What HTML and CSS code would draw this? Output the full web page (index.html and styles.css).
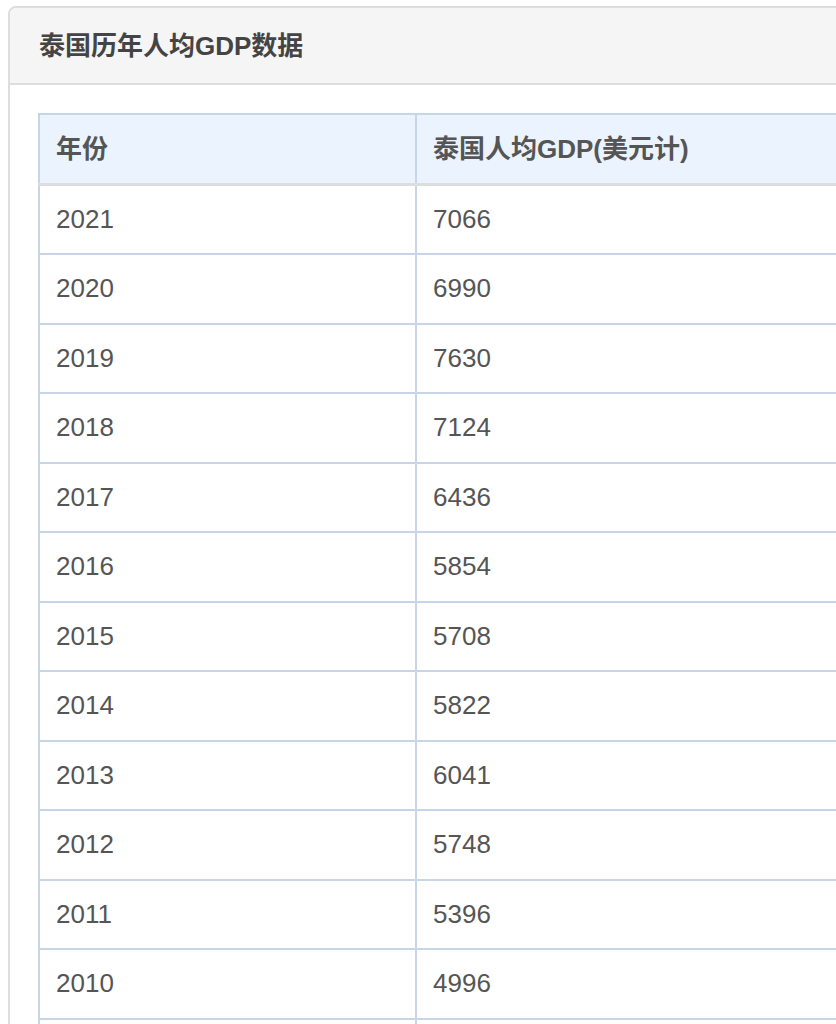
FILE: index.html
```html
<!DOCTYPE html>
<html lang="zh-CN">
<head>
<meta charset="utf-8">
<title>泰国历年人均GDP数据</title>
<link rel="stylesheet" href="styles.css">
</head>
<body>
<div class="panel">
  <div class="panel-heading">泰国历年人均GDP数据</div>
  <div class="panel-body">
    <table class="data">
      <thead>
        <tr><th class="col-year">年份</th><th>泰国人均GDP(美元计)</th></tr>
      </thead>
      <tbody>
        <tr><td>2021</td><td>7066</td></tr>
        <tr><td>2020</td><td>6990</td></tr>
        <tr><td>2019</td><td>7630</td></tr>
        <tr><td>2018</td><td>7124</td></tr>
        <tr><td>2017</td><td>6436</td></tr>
        <tr><td>2016</td><td>5854</td></tr>
        <tr><td>2015</td><td>5708</td></tr>
        <tr><td>2014</td><td>5822</td></tr>
        <tr><td>2013</td><td>6041</td></tr>
        <tr><td>2012</td><td>5748</td></tr>
        <tr><td>2011</td><td>5396</td></tr>
        <tr><td>2010</td><td>4996</td></tr>
        <tr><td>2009</td><td>4213</td></tr>
      </tbody>
    </table>
  </div>
</div>
</body>
</html>
```

FILE: styles.css
```css
html, body {
  margin: 0;
  padding: 0;
  background: #fff;
  overflow: hidden;
}
body {
  font-family: "Liberation Sans", "Noto Sans CJK SC", sans-serif;
  font-size: 26px;
  color: #555;
}
.panel {
  margin: 6px 0 0 8px;
  width: 1100px;
  border: 2px solid #dddddd;
  border-radius: 8px;
  background: #fff;
}
.panel-heading {
  background: #f5f5f5;
  border-bottom: 2px solid #dddddd;
  border-radius: 6px 6px 0 0;
  padding: 21px 29px 0 29px;
  height: 54px;
  line-height: 34px;
  font-weight: bold;
  font-size: 26px;
  color: #444;
}
.panel-body {
  padding: 28px 28px;
}
.data {
  border-collapse: collapse;
  width: 1000px;
}
.data th, .data td {
  border: 2px solid #c7d5e6;
  text-align: left;
  padding: 15px 15px 15px 16px;
  line-height: 37.5px;
  vertical-align: middle;
}
.data th {
  background: #ebf4fe;
  font-weight: bold;
  color: #555;
  border-bottom: 3px solid #dddddd;
  padding: 16px 15px 14px 16px;
}
.data .col-year {
  width: 344px;
}
```
